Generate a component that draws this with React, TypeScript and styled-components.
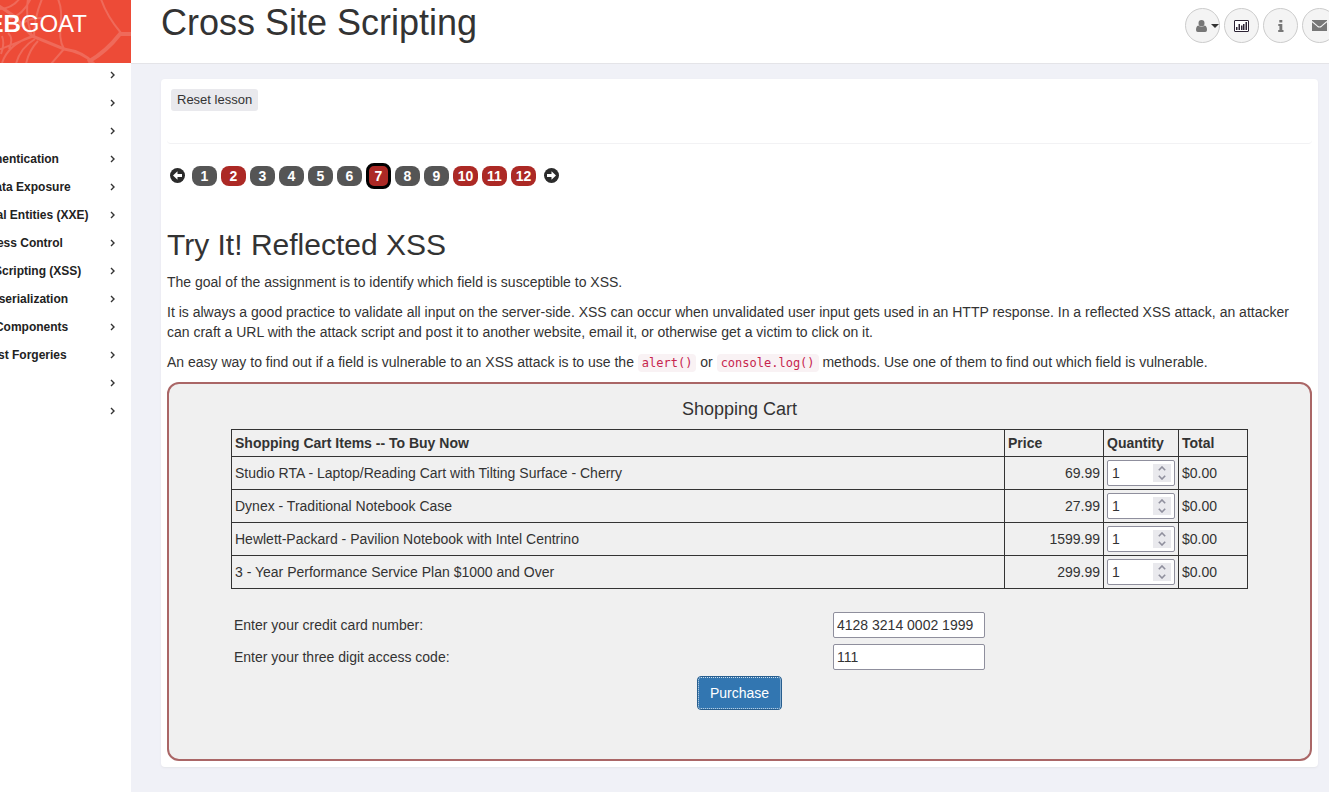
import React, { useState } from "react";
import styled, { createGlobalStyle } from "styled-components";

const GlobalStyle = createGlobalStyle`
  *, *::before, *::after { box-sizing: border-box; }
  body {
    margin: 0;
    background: #fff;
    color: #333;
    font: 14px/20px "Liberation Sans", Arial, sans-serif;
    overflow-x: hidden;
  }
  button, input { font: inherit; color: inherit; }
`;

const Page = styled.div`
  display: grid;
  grid-template-columns: 240px minmax(0, 1fr);
  margin-left: -109px;
  overflow: hidden;
`;

const Sidebar = styled.aside`
  background: #fff;
`;

const Brand = styled.a`
  display: grid;
  height: 63px;
  color: #fff;
  background: #ed4b37;
  text-decoration: none;
  overflow: hidden;
  > * { grid-area: 1 / 1; }
`;

const BrandName = styled.span`
  padding: 8px 44px 0 0;
  text-align: right;
  font-size: 24px;
  line-height: 32px;
`;

const Web = styled.svg`
  width: 131px;
  height: 63px;
  justify-self: end;
  fill: none;
  stroke: #ef6a5a;
`;

const MenuList = styled.ul`
  list-style: none;
  margin: 0;
  padding: 0;
`;

const MenuLink = styled.a`
  display: flex;
  align-items: center;
  justify-content: space-between;
  height: 28px;
  padding: 0 15px 4px 13px;
  color: #222;
  font-size: 12px;
  font-weight: bold;
  text-decoration: none;
  white-space: nowrap;
`;

const Content = styled.div`
  background: #f0f1f7;
  padding-bottom: 25px;
`;

const Header = styled.header`
  display: flex;
  justify-content: space-between;
  height: 64px;
  padding-left: 30px;
  background: #fff;
  border-bottom: 1px solid #e4e4e8;
`;

const Title = styled.h1`
  margin: 0;
  padding-top: 3px;
  font-size: 36px;
  font-weight: normal;
  line-height: 40px;
`;

const Tools = styled.nav`
  display: flex;
  gap: 4px;
  padding-top: 8px;
  margin-right: -8px;
`;

const ToolButton = styled.button<{ $menu?: boolean }>`
  display: flex;
  align-items: center;
  justify-content: ${(p) => (p.$menu ? "flex-end" : "center")};
  gap: 4px;
  width: 35px;
  height: 35px;
  padding: 0;
  border: 1px solid #ccc;
  border-radius: 50%;
  background: #f4f4f4;
  color: #777;
`;

const Card = styled.main`
  margin: 15px 11px 0 30px;
  padding: 10px 6px 6px;
  border-radius: 4px;
  background: #fff;
  box-shadow: 0 1px 2px #e4e5ea;
`;

const LessonBar = styled.div`
  height: 55px;
  padding-left: 4px;
  border-bottom: 1px solid #f2f2f4;
  border-radius: 4px;
`;

const ResetButton = styled.button`
  display: block;
  height: 22px;
  padding: 0 6px;
  border: 0;
  border-radius: 3px;
  background: #e9e9ed;
  font-size: 13px;
`;

const Pager = styled.nav`
  display: flex;
  align-items: center;
  gap: 4px;
  height: 26px;
  margin: 19px 0 38px 3px;
`;

const PagerArrow = styled.button`
  display: flex;
  padding: 0 0 2px;
  border: 0;
  background: none;
  color: #2b2b2b;
  &:first-child { margin-right: 3px; }
  &:last-child { margin-left: 4px; }
`;

const PageLink = styled.a<{ $task: boolean; $active: boolean }>`
  display: flex;
  align-items: center;
  justify-content: center;
  width: 25px;
  height: ${(p) => (p.$active ? 26 : 20)}px;
  border: ${(p) => (p.$active ? "3px solid #000" : "0")};
  border-radius: 8px;
  background: ${(p) => (p.$task ? "#ac2925" : "#555")};
  color: #fff;
  font-weight: bold;
  text-decoration: none;
`;

const Heading = styled.h2`
  margin: 0 0 9px;
  font-size: 30px;
  font-weight: normal;
  line-height: 36px;
`;

const Text = styled.p`
  margin: 0 0 10px;
`;

const Code = styled.code`
  padding: 2px 4px;
  border-radius: 4px;
  background: #f9f2f4;
  color: #c7254e;
  font: 12px "DejaVu Sans Mono", monospace;
`;

const Assignment = styled.form`
  padding: 13px 62px 49px;
  border: 2px solid #a66;
  border-radius: 12px;
  background: #f0f0f0;
`;

const CartTable = styled.table`
  width: 100%;
  border-collapse: collapse;
  table-layout: fixed;
  caption {
    padding-bottom: 8px;
    font-size: 18px;
    line-height: 24px;
  }
  th, td {
    padding: 3px;
    border: 1px solid #333;
    text-align: left;
  }
`;

const Col = styled.col<{ $w?: number }>`
  width: ${(p) => (p.$w ? `${p.$w}px` : "auto")};
`;

const PriceCell = styled.td`
  && { text-align: right; }
`;

const Quantity = styled.span`
  display: flex;
  align-items: center;
  height: 26px;
  padding: 0 3px 0 4px;
  border: 1px solid #8f8f9d;
  border-radius: 2px;
  background: #fff;
`;

const QuantityInput = styled.input`
  flex: 1;
  min-width: 0;
  padding: 0;
  border: 0;
  outline: 0;
  background: none;
  appearance: textfield;
  &::-webkit-inner-spin-button { appearance: none; margin: 0; }
`;

const Spinner = styled.span`
  display: grid;
  background: #e9e9ed;
  color: #8f8f9d;
`;

const SpinButton = styled.button`
  display: flex;
  align-items: center;
  justify-content: center;
  width: 18px;
  height: 9px;
  padding: 0;
  border: 0;
  background: none;
  color: inherit;
`;

const Fields = styled.div`
  display: grid;
  grid-template-columns: 1fr 415px;
  align-items: center;
  gap: 6px 0;
  padding: 23px 0 6px 3px;
`;

const Field = styled.input`
  width: 152px;
  height: 26px;
  padding: 0 3px;
  border: 1px solid #8f8f9d;
  border-radius: 2px;
  background: #fff;
`;

const Purchase = styled.button`
  display: block;
  height: 34px;
  margin: 0 auto;
  padding: 0 12px;
  border: 1px solid #285e8e;
  border-radius: 4px;
  background: #3276b1;
  color: #fff;
  outline: 1px dotted #cfe0ee;
  outline-offset: -2px;
`;

const lessons = [
  "Introduction",
  "General",
  "(A1) Injection",
  "(A2) Broken Authentication",
  "(A3) Sensitive Data Exposure",
  "(A4) XML External Entities (XXE)",
  "(A5) Broken Access Control",
  "(A7) Cross-Site Scripting (XSS)",
  "(A8) Insecure Deserialization",
  "(A9) Vulnerable Components",
  "(A8:2013) Request Forgeries",
  "Client side",
  "Challenges",
];

const taskPages = [2, 7, 10, 11, 12];
const pages = Array.from({ length: 12 }, (_, i) => i + 1);

const items = [
  { name: "Studio RTA - Laptop/Reading Cart with Tilting Surface - Cherry", price: "69.99" },
  { name: "Dynex - Traditional Notebook Case", price: "27.99" },
  { name: "Hewlett-Packard - Pavilion Notebook with Intel Centrino", price: "1599.99" },
  { name: "3 - Year Performance Service Plan $1000 and Over", price: "299.99" },
];

const Arrow = ({ left }: { left?: boolean }) => (
  <svg width="15" height="15" viewBox="0 0 15 15" aria-hidden="true">
    <circle cx="7.5" cy="7.5" r="7.5" fill="currentColor" />
    <path
      d="M3 6h4.500V3.200L12 7.500l-4.500 4.300V9H3z"
      fill="#fff"
      transform={left ? "rotate(180 7.5 7.5)" : undefined}
    />
  </svg>
);

const UserIcon = () => (
  <svg width="11" height="12" viewBox="0 0 11 12" fill="currentColor" aria-hidden="true">
    <path d="M5.500 0a3 3.200 0 0 1 3 3.200a3 3.200 0 0 1-6 0a3 3.200 0 0 1 3-3.200zM2.300 5.600q3.200 2.600 6.400 0Q11 6.200 11 10q0 2-1.800 2H1.800Q0 12 0 10q0-3.800 2.300-4.400z" />
  </svg>
);

const ChartIcon = () => (
  <svg width="15" height="12" viewBox="0 0 15 12" aria-hidden="true">
    <rect x=".5" y=".5" width="14" height="11" rx=".5" fill="#fff" stroke="#2b2233" />
    <path d="M2 7h1.500v3H2zM4.500 4h1.500v6h-1.500zM7 5.500h1.500V10H7zM9 4h1.500v6H9zM11.500 2H13v8h-1.500z" fill="#2b2233" />
  </svg>
);

const InfoIcon = () => (
  <svg width="6" height="12" viewBox="0 0 6 12" fill="currentColor" aria-hidden="true">
    <path d="M1.300 0h3v2.600h-3zM.3 4h4v6H5.500v2H.2v-2h1.200V6H.3z" />
  </svg>
);

const MailIcon = () => (
  <svg width="15" height="11" viewBox="0 0 15 11" aria-hidden="true">
    <path d="M0 0h15v11H0z" fill="currentColor" />
    <path d="M0 1.500l5.500 4.700q2 1.600 4 0L15 1.500" fill="none" stroke="#f4f4f4" strokeWidth="1.1" />
  </svg>
);

export default function App() {
  const [quantities, setQuantities] = useState([1, 1, 1, 1]);
  const setQuantity = (index: number, value: number) =>
    setQuantities((all) => all.map((q, i) => (i === index ? Math.max(0, value) : q)));

  return (
    <>
      <GlobalStyle />
      <Page>
        <Sidebar>
          <Brand href="#">
            <Web viewBox="0 0 131 63" aria-hidden="true">
              <path strokeWidth="3" d="M-4 4L14 16L32 36L64 49Q84 52 94 64" />
              <path strokeWidth="2" d="M58 -1C66 17 55 34 64 49M64 49L51 64M101 -1C105 11 110 20 121 33" />
              <path strokeWidth="4" d="M88 62Q106 52 120 34L131 34" />
              <path strokeWidth="2" d="M0 9Q13 8 20 -2M10 19Q24 14 31 -2M17 30Q24 17 44 18M-2 50L34 36M2 63Q8 45 30 37M16 64Q20 48 35 39M26 64Q29 50 38 41M2 36Q5 44 1 54M8 33Q14 38 9 49M28 -1Q25 17 32 36M42 -1Q34 18 34 37" />
            </Web>
            <BrandName><b>WEB</b>GOAT</BrandName>
          </Brand>
          <MenuList>
            {lessons.map((name) => (
              <li key={name}>
                <MenuLink href="#">
                  {name}
                  <svg width="6" height="8" viewBox="0 0 6 8" fill="none" stroke="#333" strokeWidth="1.4" aria-hidden="true">
                    <path d="M1 1l3 3-3 3" />
                  </svg>
                </MenuLink>
              </li>
            ))}
          </MenuList>
        </Sidebar>
        <Content>
          <Header>
            <Title>Cross Site Scripting</Title>
            <Tools aria-label="Tools">
              <ToolButton $menu aria-label="User">
                <UserIcon />
                <svg width="8" height="4" viewBox="0 0 8 4" aria-hidden="true">
                  <path d="M0 0h8L4 4z" fill="#333" />
                </svg>
              </ToolButton>
              <ToolButton aria-label="Report card"><ChartIcon /></ToolButton>
              <ToolButton aria-label="About"><InfoIcon /></ToolButton>
              <ToolButton aria-label="Contact"><MailIcon /></ToolButton>
            </Tools>
          </Header>
          <Card>
            <LessonBar>
              <ResetButton>Reset lesson</ResetButton>
            </LessonBar>
            <Pager aria-label="Lesson pages">
              <PagerArrow aria-label="Previous"><Arrow left /></PagerArrow>
              {pages.map((n) => (
                <PageLink key={n} href="#" $task={taskPages.includes(n)} $active={n === 7}>
                  {n}
                </PageLink>
              ))}
              <PagerArrow aria-label="Next"><Arrow /></PagerArrow>
            </Pager>
            <Heading>Try It! Reflected XSS</Heading>
            <Text>The goal of the assignment is to identify which field is susceptible to XSS.</Text>
            <Text>
              It is always a good practice to validate all input on the server-side. XSS can occur when
              unvalidated user input gets used in an HTTP response. In a reflected XSS attack, an attacker
              can craft a URL with the attack script and post it to another website, email it, or otherwise
              get a victim to click on it.
            </Text>
            <Text>
              An easy way to find out if a field is vulnerable to an XSS attack is to use the{" "}
              <Code>alert()</Code> or <Code>console.log()</Code> methods. Use one of them to find out which
              field is vulnerable.
            </Text>
            <Assignment onSubmit={(e) => e.preventDefault()}>
              <CartTable>
                <caption>Shopping Cart</caption>
                <colgroup>
                  <Col />
                  <Col $w={99} />
                  <Col $w={75} />
                  <Col $w={69} />
                </colgroup>
                <thead>
                  <tr>
                    <th>Shopping Cart Items -- To Buy Now</th>
                    <th>Price</th>
                    <th>Quantity</th>
                    <th>Total</th>
                  </tr>
                </thead>
                <tbody>
                  {items.map((item, i) => (
                    <tr key={item.name}>
                      <td>{item.name}</td>
                      <PriceCell>{item.price}</PriceCell>
                      <td>
                        <Quantity>
                          <QuantityInput
                            type="number"
                            aria-label={`Quantity of ${item.name}`}
                            value={quantities[i]}
                            onChange={(e) => setQuantity(i, Number(e.target.value))}
                          />
                          <Spinner>
                            <SpinButton type="button" aria-label="Increase" onClick={() => setQuantity(i, quantities[i] + 1)}>
                              <svg width="8" height="5" viewBox="0 0 8 5" fill="none" stroke="currentColor" strokeWidth="1.6">
                                <path d="M.8 4.200L4 1l3.200 3.200" />
                              </svg>
                            </SpinButton>
                            <SpinButton type="button" aria-label="Decrease" onClick={() => setQuantity(i, quantities[i] - 1)}>
                              <svg width="8" height="5" viewBox="0 0 8 5" fill="none" stroke="currentColor" strokeWidth="1.6">
                                <path d="M.8 .8L4 4l3.200-3.200" />
                              </svg>
                            </SpinButton>
                          </Spinner>
                        </Quantity>
                      </td>
                      <td>$0.00</td>
                    </tr>
                  ))}
                </tbody>
              </CartTable>
              <Fields>
                <label htmlFor="card">Enter your credit card number:</label>
                <Field id="card" defaultValue="4128 3214 0002 1999" />
                <label htmlFor="code">Enter your three digit access code:</label>
                <Field id="code" defaultValue="111" />
              </Fields>
              <Purchase type="submit">Purchase</Purchase>
            </Assignment>
          </Card>
        </Content>
      </Page>
    </>
  );
}
